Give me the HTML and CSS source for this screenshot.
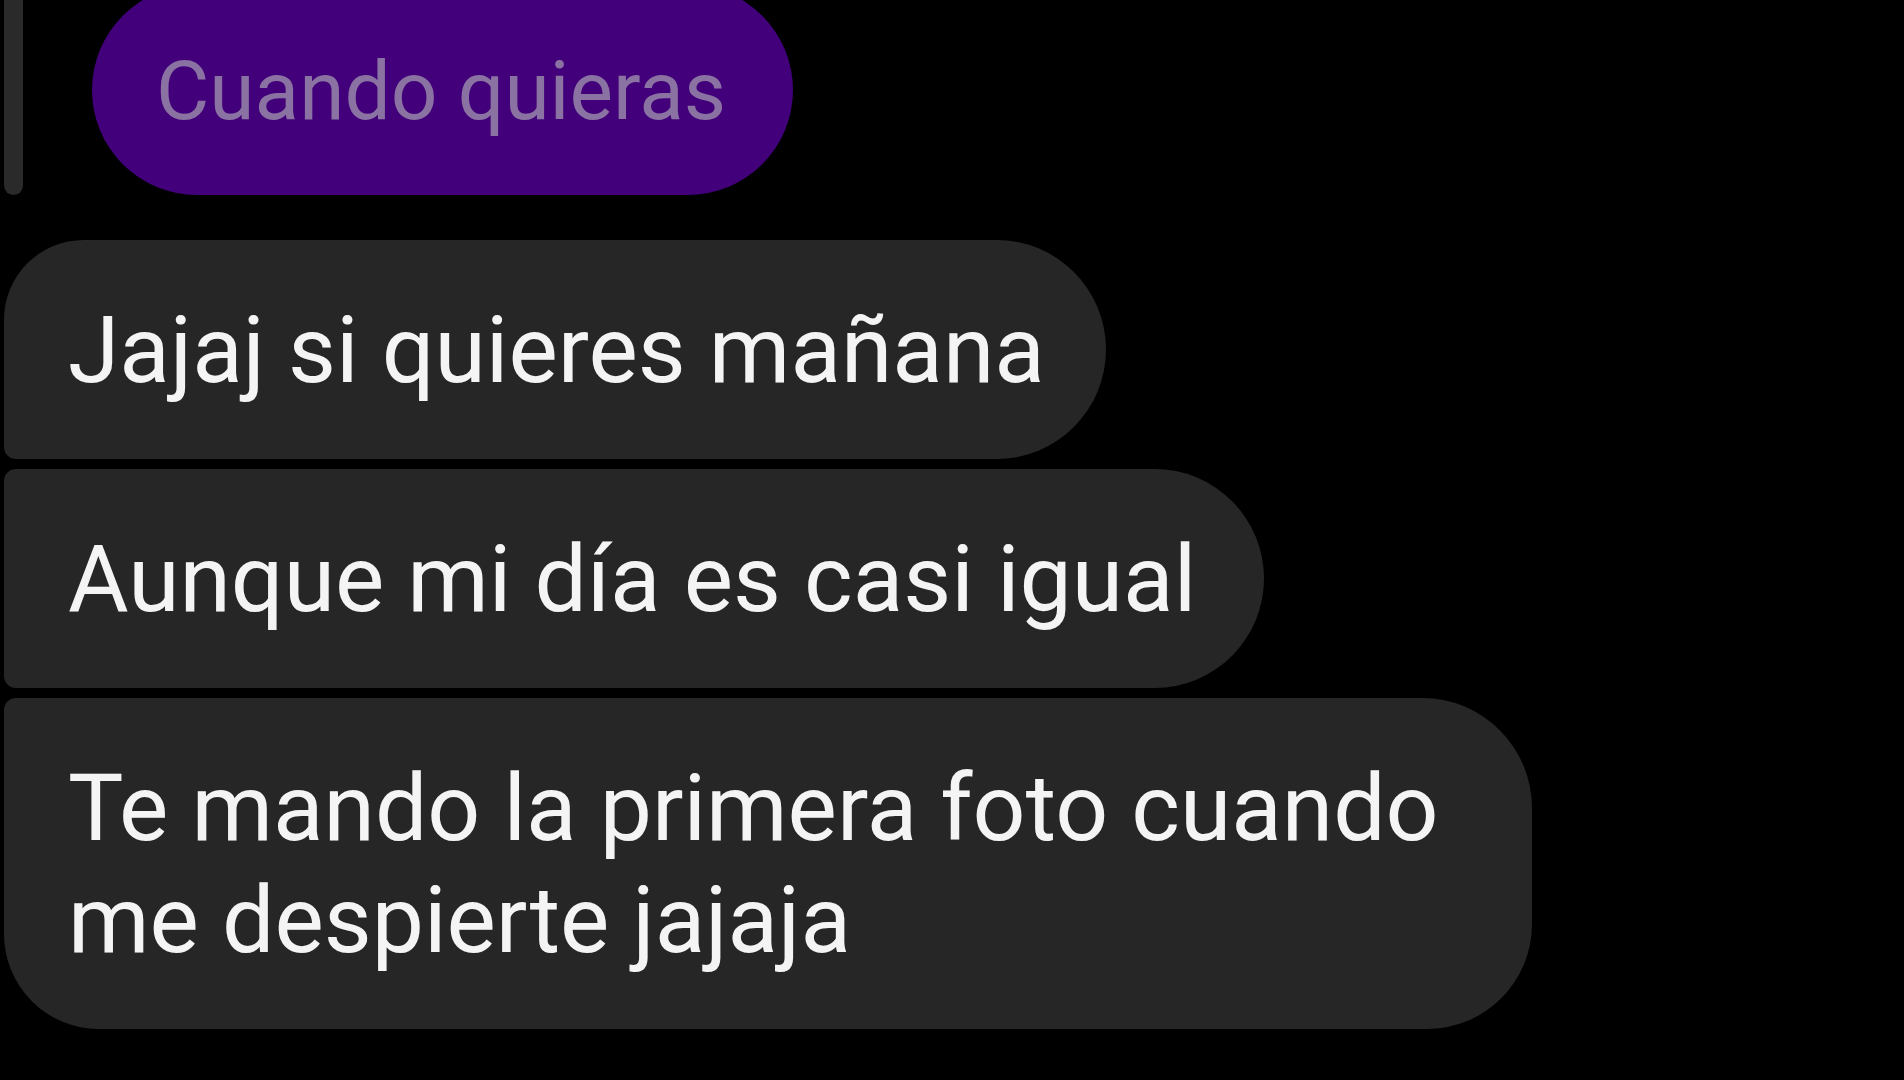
FILE: index.html
```html
<!DOCTYPE html>
<html lang="es">
<head>
    <meta charset="UTF-8">
    <meta name="viewport" content="width=device-width, initial-scale=1.0">
    <title>Chat</title>
    <link rel="stylesheet" href="styles.css">
</head>
<body>

    <div class="thread">
        <!-- Mensaje enviado (respuesta) -->
        <div class="sent-row">
            <span class="reply-bar"></span>
            <div class="bubble-sent">Cuando quieras</div>
        </div>

        <!-- Mensajes recibidos -->
        <div class="received-group">
            <div class="bubble first">Jajaj si quieres mañana</div>
            <div class="bubble middle">Aunque mi día es casi igual</div>
            <div class="bubble last">Te mando la primera foto cuando me despierte jajaja</div>
        </div>
    </div>

</body>
</html>
```

FILE: styles.css
```css
/* --- Base --- */
* {
    margin: 0;
    padding: 0;
    box-sizing: border-box;
}

html, body {
    background-color: #000000;
    height: 100%;
    overflow: hidden;
}

body {
    font-family: 'Roboto', 'Liberation Sans', sans-serif;
    color: #f4f4f4;
    -webkit-font-smoothing: antialiased;
}

/* --- Thread --- */
.thread {
    display: flex;
    flex-direction: column;
    align-items: flex-start;
    gap: 45px;
    padding-left: 4px;
    margin-top: -15px; /* la conversación está desplazada hacia arriba */
}

/* --- Sent message --- */
.sent-row {
    display: flex;
    align-items: flex-end;
    gap: 69px;
}

.reply-bar {
    display: block;
    width: 19px;
    height: 210px;
    background-color: #2a2a2a;
    border-radius: 0 0 10px 10px;
}

.bubble-sent {
    background-color: #42017a;
    color: #8a72a2;
    font-size: 82px;
    line-height: 100px;
    padding: 56px 67px 54px 64px;
    border-radius: 105px;
    white-space: nowrap;
}

/* --- Received group --- */
.received-group {
    display: flex;
    flex-direction: column;
    align-items: flex-start;
    gap: 10px;
}

.bubble {
    background-color: #262626;
    font-size: 93px;
    line-height: 112px;
    padding: 55px 66px 52px 64px;
    max-width: 1528px;
}

.bubble.first  { border-radius: 80px 110px 110px 12px; padding-right: 61px; }
.bubble.middle { border-radius: 12px 110px 110px 12px; padding-right: 68px; }
.bubble.last   { border-radius: 12px 110px 105px 95px; width: 1528px; }
```
